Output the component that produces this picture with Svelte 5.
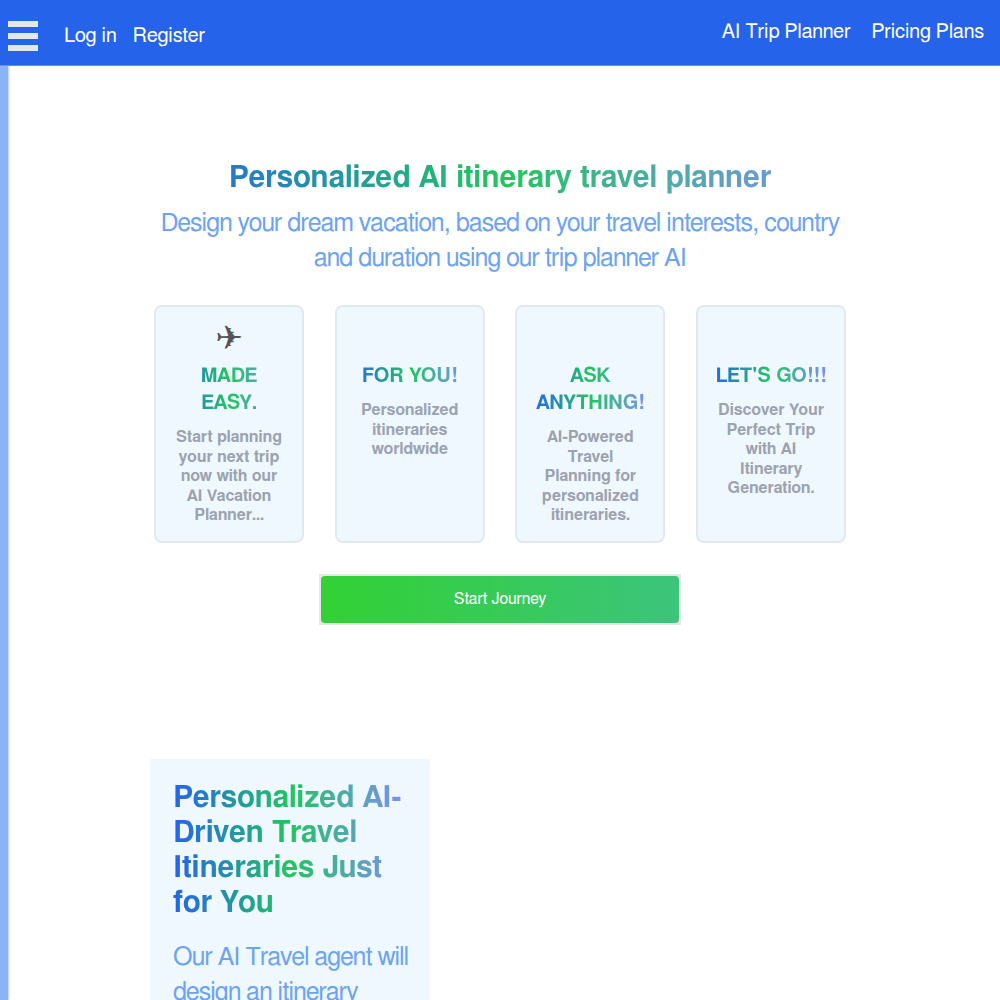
<script>
  const cards = [
    { icon: '✈', title: 'MADE EASY.', text: 'Start planning your next trip now with our AI Vacation Planner...' },
    { icon: '', title: 'FOR YOU!', text: 'Personalized itineraries worldwide' },
    { icon: '', title: 'ASK ANYTHING!', text: 'AI-Powered Travel Planning for personalized itineraries.' },
    { icon: '', title: "LET'S GO!!!", text: 'Discover Your Perfect Trip with AI Itinerary Generation.' }
  ];
</script>

<div class="page">
  <header class="topbar">
    <div class="left">
      <button class="burger" aria-label="Menu"><span></span><span></span><span></span></button>
      <nav class="auth"><a href="#a">Log in</a><a href="#b">Register</a></nav>
    </div>
    <nav class="links"><a href="#c">AI Trip Planner</a><a href="#d">Pricing Plans</a></nav>
  </header>

  <div class="body">
    <aside class="rail"></aside>
    <main class="main">
      <section class="hero">
        <h1 class="grad">Personalized AI itinerary travel planner</h1>
        <p class="sub">Design your dream vacation, based on your travel interests, country and duration using our trip planner AI</p>
        <div class="cards">
          {#each cards as c}
            <article class="card">
              <div class="icon">{c.icon}</div>
              <h3 class="grad">{c.title}</h3>
              <p>{c.text}</p>
            </article>
          {/each}
        </div>
        <div class="cta"><button>Start Journey</button></div>
      </section>

      <section class="feature">
        <h2 class="grad">Personalized AI-Driven Travel Itineraries Just for You</h2>
        <p>Our AI Travel agent will design an itinerary tailored</p>
      </section>
    </main>
  </div>
</div>

<style>
  :global(body) {
    margin: 0;
    background: #fff;
    font-family: FreeSans, "Liberation Sans", Arial, sans-serif;
  }
  :global(html) { scrollbar-width: none; }
  .page { height: 1000px; overflow: hidden; }
  .topbar {
    height: 66px;
    box-sizing: border-box;
    background: #2563eb;
    border-bottom: 1px solid #5a8bf0;
    display: flex;
    justify-content: space-between;
    align-items: flex-start;
    color: #fff;
  }
  .left { display: flex; align-items: center; height: 65px; padding-top: 6px; box-sizing: border-box; }
  .burger {
    width: 30px;
    margin-left: 8px;
    padding: 0;
    border: 0;
    background: none;
    display: flex;
    flex-direction: column;
    gap: 6px;
  }
  .burger span { height: 6px; background: #e2e8e8; }
  .auth { display: flex; gap: 16px; margin-left: 26px; padding-top: 2px; }
  .links { display: flex; gap: 21px; margin-right: 16px; padding-top: 21px; letter-spacing: -0.05px; }
  a { color: #fff; text-decoration: none; font-size: 20px; line-height: 23px; }

  .body { display: flex; }
  .rail {
    width: 8px;
    flex: none;
    height: 934px;
    background: #8cb4f3;
    box-shadow: 1px 0 2px rgba(140, 180, 243, 0.7);
  }
  .main { flex: 1; margin-left: -8px; }
  .grad {
    background: linear-gradient(90deg, #2563eb, #22c55e, #818cf8);
    -webkit-background-clip: text;
    background-clip: text;
    color: transparent;
  }
  .hero { width: 700px; margin: 0 auto; padding-top: 94px; }
  h1 {
    margin: 0;
    font-size: 30px;
    line-height: 36px;
    font-weight: 700;
    letter-spacing: -0.15px;
    text-align: center;
  }
  .sub {
    margin: 10px 0 0;
    font-size: 25px;
    line-height: 35px;
    letter-spacing: -0.625px;
    color: #6ca3f2;
    text-align: center;
  }
  .cards {
    display: grid;
    grid-template-columns: repeat(4, 150px);
    column-gap: 30.67px;
    justify-content: center;
    margin-top: 29px;
  }
  .card {
    box-sizing: border-box;
    height: 238px;
    padding: 15px 17px 0;
    background: #f0f8ff;
    border: 2px solid #e2e8f0;
    border-radius: 8px;
    text-align: center;
  }
  .icon {
    height: 32px;
    font-size: 33px;
    line-height: 32px;
    color: #555;
    font-family: "DejaVu Sans", sans-serif;
  }
  h3 {
    margin: 9px -3px 0;
    font-size: 20px;
    line-height: 27px;
    font-weight: 700;
    letter-spacing: -0.1px;
  }
  .card p {
    margin: 11px 0 0;
    font-size: 16px;
    line-height: 19.6px;
    font-weight: 700;
    letter-spacing: -0.05px;
    color: #9ca3af;
  }
  .cta { display: flex; justify-content: center; margin-top: 31px; }
  .cta button {
    width: 362px;
    height: 51px;
    padding: 0 0 2px;
    border: 2px solid #e5e7eb;
    border-radius: 0;
    background: #e5e7eb;
    color: #fff;
    font: 16px FreeSans, "Liberation Sans", Arial, sans-serif;
    position: relative;
    z-index: 0;
  }
  .cta button::before {
    content: "";
    position: absolute;
    inset: 0;
    z-index: -1;
    border-radius: 4px;
    background: linear-gradient(90deg, #32d134, #3cc47c);
  }
  .feature {
    width: 280px;
    box-sizing: border-box;
    margin: 134px 0 0 150px;
    padding: 22px 20px 24px 23px;
    background: #f0f8ff;
  }
  .feature h2 {
    margin: 0 3px 0 0;
    font-size: 30px;
    line-height: 35px;
    font-weight: 700;
    letter-spacing: -0.2px;
  }
  .feature p {
    margin: 19px 0 0;
    font-size: 25px;
    line-height: 35px;
    letter-spacing: -0.625px;
    color: #6ca3f2;
  }
</style>
